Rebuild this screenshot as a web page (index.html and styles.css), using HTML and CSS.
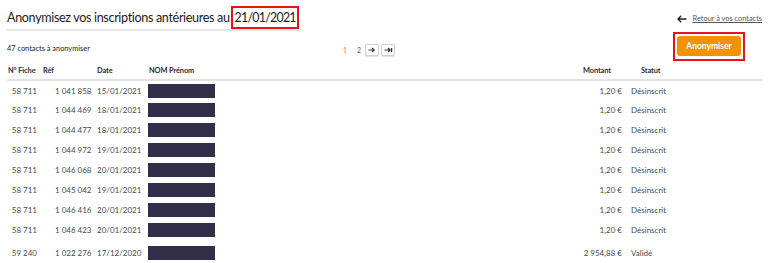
FILE: index.html
```html
<!DOCTYPE html>
<html lang="fr">
<head>
<meta charset="utf-8">
<title>Anonymisation</title>
<link rel="stylesheet" href="styles.css">
</head>
<body>
<div class="page">
  <header class="top">
    <h1 class="title">Anonymisez vos inscriptions antérieures au<span class="hl">21/01/2021</span></h1>
    <a class="back" href="#">
      <svg class="back-icon" width="10" height="8" viewBox="0 0 10 8"><path d="M9.5 4H1.2M4.2 0.8L1 4l3.2 3.2" fill="none" stroke="#1f1d2b" stroke-width="1.3"/></svg>
      <span class="back-text">Retour à vos contacts</span>
    </a>
  </header>
  <div class="toolbar">
    <div class="count">47 contacts à anonymiser</div>
    <nav class="pager">
      <span class="pg current">1</span>
      <span class="pg next">2</span>
      <span class="pbtn"><svg width="8" height="6" viewBox="0 0 8 6"><path d="M0.5 3H6M4 1l2.2 2L4 5" fill="none" stroke="#333" stroke-width="1.1"/></svg></span>
      <span class="pbtn"><svg width="9" height="6" viewBox="0 0 9 6"><path d="M0.5 3H6M4 1l2.2 2L4 5M7.6 1v4" fill="none" stroke="#333" stroke-width="1.2"/></svg></span>
    </nav>
    <div class="action"><button class="btn">Anonymiser</button></div>
  </div>
  <table class="grid">
    <colgroup>
      <col class="c1"><col class="c2"><col class="c3"><col class="c4"><col class="c5"><col class="c6">
    </colgroup>
    <thead>
      <tr>
        <th class="h1c">N° Fiche</th><th class="h2c">Réf</th><th class="h3c">Date</th><th class="h4c">NOM Prénom</th><th class="h5c">Montant</th><th class="h6c">Statut</th>
      </tr>
    </thead>
    <tbody>
      <tr><td class="d1">58&#8239;711</td><td class="d2">1&#8239;041&#8239;858</td><td class="d3">15/01/2021</td><td class="d4"><span class="mask"></span></td><td class="d5">1,20&nbsp;€</td><td class="d6">Désinscrit</td></tr>
      <tr><td class="d1">58&#8239;711</td><td class="d2">1&#8239;044&#8239;469</td><td class="d3">18/01/2021</td><td class="d4"><span class="mask"></span></td><td class="d5">1,20&nbsp;€</td><td class="d6">Désinscrit</td></tr>
      <tr><td class="d1">58&#8239;711</td><td class="d2">1&#8239;044&#8239;477</td><td class="d3">18/01/2021</td><td class="d4"><span class="mask"></span></td><td class="d5">1,20&nbsp;€</td><td class="d6">Désinscrit</td></tr>
      <tr><td class="d1">58&#8239;711</td><td class="d2">1&#8239;044&#8239;972</td><td class="d3">19/01/2021</td><td class="d4"><span class="mask"></span></td><td class="d5">1,20&nbsp;€</td><td class="d6">Désinscrit</td></tr>
      <tr><td class="d1">58&#8239;711</td><td class="d2">1&#8239;046&#8239;068</td><td class="d3">20/01/2021</td><td class="d4"><span class="mask"></span></td><td class="d5">1,20&nbsp;€</td><td class="d6">Désinscrit</td></tr>
      <tr><td class="d1">58&#8239;711</td><td class="d2">1&#8239;045&#8239;042</td><td class="d3">19/01/2021</td><td class="d4"><span class="mask"></span></td><td class="d5">1,20&nbsp;€</td><td class="d6">Désinscrit</td></tr>
      <tr><td class="d1">58&#8239;711</td><td class="d2">1&#8239;046&#8239;416</td><td class="d3">20/01/2021</td><td class="d4"><span class="mask"></span></td><td class="d5">1,20&nbsp;€</td><td class="d6">Désinscrit</td></tr>
      <tr><td class="d1">58&#8239;711</td><td class="d2">1&#8239;046&#8239;423</td><td class="d3">20/01/2021</td><td class="d4"><span class="mask"></span></td><td class="d5">1,20&nbsp;€</td><td class="d6">Désinscrit</td></tr>
      <tr class="last"><td class="d1">59&#8239;240</td><td class="d2">1&#8239;022&#8239;276</td><td class="d3">17/12/2020</td><td class="d4"><span class="mask"></span></td><td class="d5">2&#8239;954,88&nbsp;€</td><td class="d6">Validé</td></tr>
    </tbody>
  </table>
</div>
</body>
</html>
```
FILE: styles.css
```css
* { box-sizing: border-box; }
html, body { margin: 0; padding: 0; background: #fff; }
body { font-family: Lato, "Noto Sans", sans-serif; color: #444; }
.page { padding: 0 14px 0 7px; width: 776px; }

.top { display: flex; justify-content: space-between; align-items: flex-start; height: 32px; }
.title {
  margin: 6px 0 0; font-size: 12.6px; line-height: 19px; font-weight: 400; color: #1c1c24;
  border-bottom: 2px solid #e6e6e6; letter-spacing: -0.35px;
}
.hl { display: inline-block; border: 2px solid #e8141b; padding: 0 1px 0 2px; margin-left: 1px; line-height: 19px; font-size: 12.4px; letter-spacing: -0.75px; }
.back { margin-top: 14px; display: flex; align-items: center; gap: 6px; text-decoration: none; }
.back-icon { display: block; }
.back-text { font-size: 7.4px; line-height: 10px; color: #555; text-decoration: underline; }

.toolbar { display: grid; grid-template-columns: 336px auto 1fr; align-items: start; height: 30px; }
.count { margin-top: 12px; font-size: 7.4px; line-height: 10px; color: #222; }
.pager { margin-top: 12px; display: flex; align-items: center; height: 12px; font-size: 7px; }
.pg { color: #555; }
.pg.current { color: #f39200; width: 14px; }
.pg.next { width: 8px; }
.pbtn {
  display: flex; align-items: center; justify-content: center;
  width: 14px; height: 12px; margin-right: 2px; border: 1px solid #cfcfcf; border-radius: 2px;
  background: #fff; box-shadow: 0 1px 1px rgba(0,0,0,0.12);
}
.pbtn svg { display: block; }
.action { justify-self: end; margin-right: 17px; border: 2px solid #e8141b; padding: 2px 2px 3px; }
.btn {
  display: block; width: 64px; height: 20px; border: 0; border-radius: 3px; background: #f39200;
  color: #fff; font-family: Lato, sans-serif; font-size: 8.5px; font-weight: 700; padding: 0;
}

.grid { width: 755px; border-collapse: collapse; table-layout: fixed; font-size: 8px; }
.c1 { width: 36px; } .c2 { width: 54px; } .c3 { width: 51px; } .c4 { width: 435px; } .c5 { width: 45px; } .c6 { width: 134px; }
.grid th {
  height: 18px; padding: 0; text-align: left; font-weight: 700; color: #2a2a33; font-size: 7.4px;
  letter-spacing: -0.1px; border-bottom: 2px solid #e2e2e2; vertical-align: middle; white-space: nowrap;
}
.h1c { padding-left: 1px !important; }
.h4c { padding-left: 1px !important; }
.h6c { padding-left: 13px !important; }
.grid td { height: 20px; padding: 0; vertical-align: middle; color: #4a4a4a; white-space: nowrap; }
.d1 { text-align: right; padding-right: 6px !important; }
.d2 { padding-left: 12px !important; }
.d4 { line-height: 0; }
.d5 { text-align: right; padding-right: 6px !important; }
.d6 { padding-left: 3px !important; }
.mask { display: inline-block; width: 67px; height: 14px; background: #332e4a; }
.last td { height: 23px; padding-top: 3px !important; }
```
